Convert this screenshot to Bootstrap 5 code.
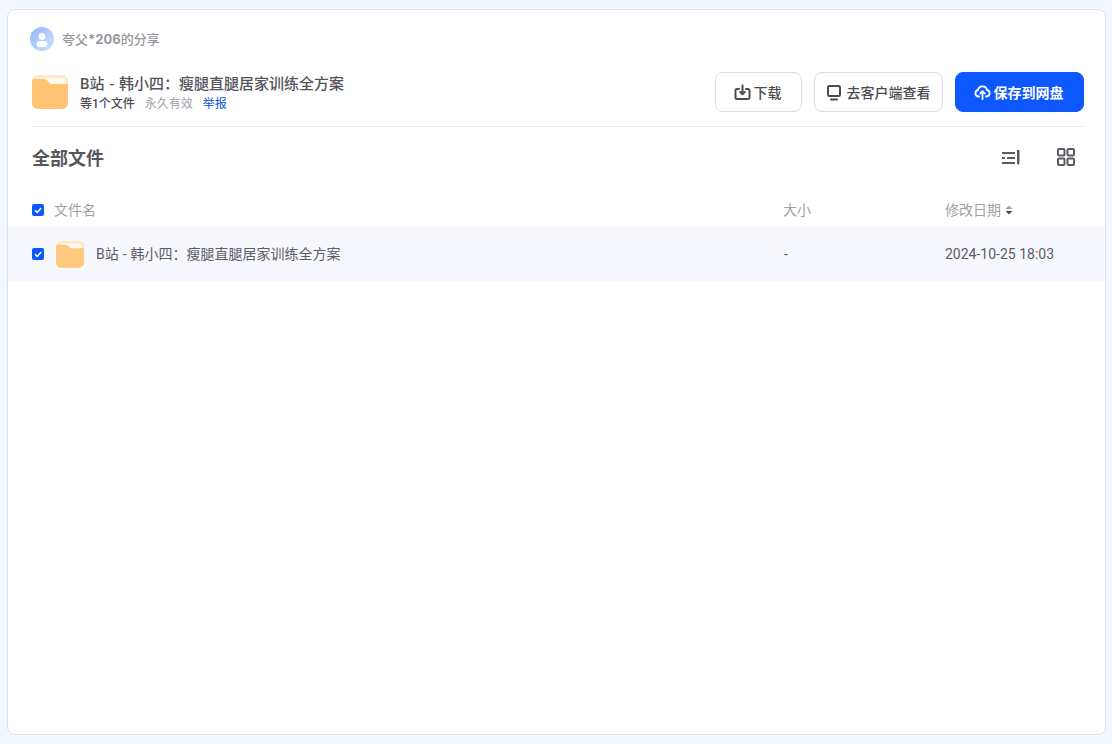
<!DOCTYPE html>
<html lang="zh">
<head>
<meta charset="utf-8">
<title>分享</title>
<link href="https://cdn.jsdelivr.net/npm/bootstrap@5.3.0/dist/css/bootstrap.min.css" rel="stylesheet">
<style>
html,body{height:100%;}
body{background:#f2f6ff;font-family:Roboto,"Noto Sans CJK SC",sans-serif;color:#4b4b52;overflow:hidden;}
.page-wrap{padding:9px 6px 9px 7px;height:744px;}
.share-panel{height:726px;background:#fff;border:1px solid #dfe2ea;border-radius:8px;overflow:hidden;}
.top-area{padding:17px 21px 0 24px;}
.owner-line{height:24px;margin-left:-2px;font-family:Inter,"Noto Sans CJK SC",sans-serif;font-size:13px;font-weight:500;color:#97979e;}
.owner-text{padding-top:1px;}
.owner-num{font-weight:700;}
.info-line{height:40px;margin-top:21px;}
.title-block{padding-top:2px;}
.share-title{font-size:15px;font-weight:500;line-height:20px;color:#54545c;word-spacing:1px;}
.share-sub{font-size:12px;line-height:18px;margin-top:1px;gap:10px;}
.sub-dark{color:#4b4b52;font-weight:500;}
.sub-grey{color:#a0a0a7;}
.sub-link{color:#0d53e0;text-decoration:none;}
.action-row{gap:12px;}
.act-btn{height:40px;border-radius:8px;border:1px solid #dcdde2;background:#fff;color:#4b4b52;font-size:14px;font-weight:500;padding:0 2px 0 0;gap:3px;}
.act-btn span{padding-top:2px;}
.act-dl{width:87px;}
.act-client{width:129px;gap:5px;padding:0 1px 0 0;}
.act-save{width:129px;background:#0d57ff;border-color:#0d57ff;color:#fff;font-weight:700;}
.act-save:hover{background:#0d57ff;border-color:#0d57ff;color:#fff;}
.top-rule{height:1px;background:#ebecef;margin-top:14px;}
.section-line{height:62px;}
.section-title{font-size:18px;font-weight:700;color:#55555c;}
.tool-gap{gap:37px;padding-right:9px;margin-top:-2px;}
.file-grid{display:grid;grid-template-columns:751px 162px 1fr;}
.head-row{height:34px;margin-top:4px;font-size:14px;color:#a0a0a7;padding-left:24px;}
.file-row{height:54px;background:#f7f7fe;font-size:14px;color:#5c5c64;padding-left:24px;}
.row-name{word-spacing:.5px;}
.size-dash{padding-left:1px;}
.tick-box{width:12px;height:12px;border-radius:2px;background:#0d57ff;flex:none;}
.head-tick{margin-right:10px;}
.folder-small{margin:0 12px;}
</style>
</head>
<body>
<div class="page-wrap">
  <div class="share-panel">
    <div class="top-area">
      <div class="owner-line d-flex align-items-center gap-2">
        <svg width="24" height="24" viewBox="0 0 24 24"><defs><linearGradient id="av" x1="0" y1="0" x2="1" y2="1"><stop offset="0" stop-color="#8fb5fb"/><stop offset="1" stop-color="#d3e2ff"/></linearGradient></defs><circle cx="12" cy="12" r="12" fill="url(#av)"/><circle cx="12" cy="9.5" r="3.4" fill="#fff"/><rect x="6.5" y="14" width="11" height="6" rx="3" fill="#fff"/></svg>
        <span class="owner-text">夸父<span class="owner-num">*206</span>的分享</span>
      </div>
      <div class="info-line d-flex align-items-center justify-content-between">
        <div class="d-flex align-items-center gap-2">
          <svg class="me-1" width="36" height="34" viewBox="0 0 36 34"><rect width="36" height="34" rx="6" fill="#ffe6c4"/><path d="M5 3h26a2 2 0 0 1 2 2v5H5z" fill="#fff8ef"/><path d="M0 7a3 3 0 0 1 3-3h9c2 0 3 1 4 2.500 1 1.500 2 2.500 4 2.500h16v19a6 6 0 0 1-6 6H6a6 6 0 0 1-6-6z" fill="#ffc374"/></svg>
          <div class="title-block">
            <div class="share-title">B站 - 韩小四：瘦腿直腿居家训练全方案</div>
            <div class="share-sub d-flex"><span class="sub-dark">等1个文件</span><span class="sub-grey">永久有效</span><a class="sub-link" href="#">举报</a></div>
          </div>
        </div>
        <div class="d-flex action-row">
          <button class="btn act-btn act-dl d-flex align-items-center justify-content-center" type="button">
            <svg width="17" height="17" viewBox="0 0 17 17" fill="none" stroke="#4b4b52" stroke-width="2" stroke-linecap="round" stroke-linejoin="round"><path d="M5 5H3a1.500 1.500 0 0 0-1.500 1.500v7A1.500 1.500 0 0 0 3 15h11a1.500 1.500 0 0 0 1.500-1.500v-7A1.500 1.500 0 0 0 14 5h-2"/><path d="M8.500 1.500v8.500M6.200 8l2.300 2.300L10.800 8"/></svg>
            <span>下载</span>
          </button>
          <button class="btn act-btn act-client d-flex align-items-center justify-content-center" type="button">
            <svg width="16" height="17" viewBox="0 0 16 17" fill="none" stroke="#4b4b52" stroke-width="2" stroke-linecap="round"><rect x="2" y="2" width="12" height="10" rx="1.500"/><path d="M5 15.500h6"/></svg>
            <span>去客户端查看</span>
          </button>
          <button class="btn act-btn act-save d-flex align-items-center justify-content-center" type="button">
            <svg width="17" height="16" viewBox="0 0 17 16" fill="none" stroke="#fff" stroke-width="1.800" stroke-linecap="round" stroke-linejoin="round"><path d="M5 12.500H4.300A3.300 3.300 0 0 1 4 6a4.600 4.600 0 0 1 9 0 3.300 3.300 0 0 1-.3 6.500H12"/><path d="M8.500 15V7.500M6.200 9.500l2.300-2.300 2.300 2.300"/></svg>
            <span>保存到网盘</span>
          </button>
        </div>
      </div>
      <div class="top-rule"></div>
      <div class="section-line d-flex align-items-center justify-content-between">
        <div class="section-title">全部文件</div>
        <div class="d-flex align-items-center tool-gap">
          <svg width="18" height="15" viewBox="0 0 18 15" fill="none" stroke="#5a5a61" stroke-width="2"><path d="M0 3h13M0 8h3M5 8h8M0 13h13"/><path d="M15 0h2.500v13l-1 2-1.500-1.500z" fill="#5a5a61" stroke="none"/></svg>
          <svg width="18" height="18" viewBox="0 0 18 18" fill="none" stroke="#5a5a61" stroke-width="2"><rect x="1" y="1" width="6.500" height="6.500" rx="1"/><rect x="10.500" y="1" width="6.500" height="6.500" rx="1"/><rect x="1" y="10.500" width="6.500" height="6.500" rx="1"/><rect x="10.500" y="10.500" width="6.500" height="6.500" rx="1"/></svg>
        </div>
      </div>
    </div>
    <div class="head-row file-grid align-items-center">
      <div class="d-flex align-items-center">
        <svg class="tick-box head-tick" viewBox="0 0 12 12"><path d="M3 6.200l2.200 2.200L9.200 4" fill="none" stroke="#fff" stroke-width="1.500"/></svg>
        <span>文件名</span>
      </div>
      <div>大小</div>
      <div class="d-flex align-items-center gap-1">修改日期
        <svg width="8" height="10" viewBox="0 0 8 10"><path d="M4 0.500L7.500 4h-7z" fill="#a0a0a7"/><path d="M4 9.500L7.500 6h-7z" fill="#4b4b52"/></svg>
      </div>
    </div>
    <div class="file-row file-grid align-items-center">
      <div class="d-flex align-items-center">
        <svg class="tick-box" viewBox="0 0 12 12"><path d="M3 6.200l2.200 2.200L9.200 4" fill="none" stroke="#fff" stroke-width="1.500"/></svg>
        <svg class="folder-small" width="28" height="27" viewBox="0 0 36 34"><rect width="36" height="34" rx="6" fill="#ffe6c4"/><path d="M5 3h26a2 2 0 0 1 2 2v5H5z" fill="#fff8ef"/><path d="M0 7a3 3 0 0 1 3-3h9c2 0 3 1 4 2.500 1 1.500 2 2.500 4 2.500h16v19a6 6 0 0 1-6 6H6a6 6 0 0 1-6-6z" fill="#ffc97e"/></svg>
        <span class="row-name">B站 - 韩小四：瘦腿直腿居家训练全方案</span>
      </div>
      <div class="size-dash">-</div>
      <div>2024-10-25 18:03</div>
    </div>
  </div>
</div>
<script src="https://cdn.jsdelivr.net/npm/bootstrap@5.3.0/dist/js/bootstrap.bundle.min.js"></script>
</body>
</html>
